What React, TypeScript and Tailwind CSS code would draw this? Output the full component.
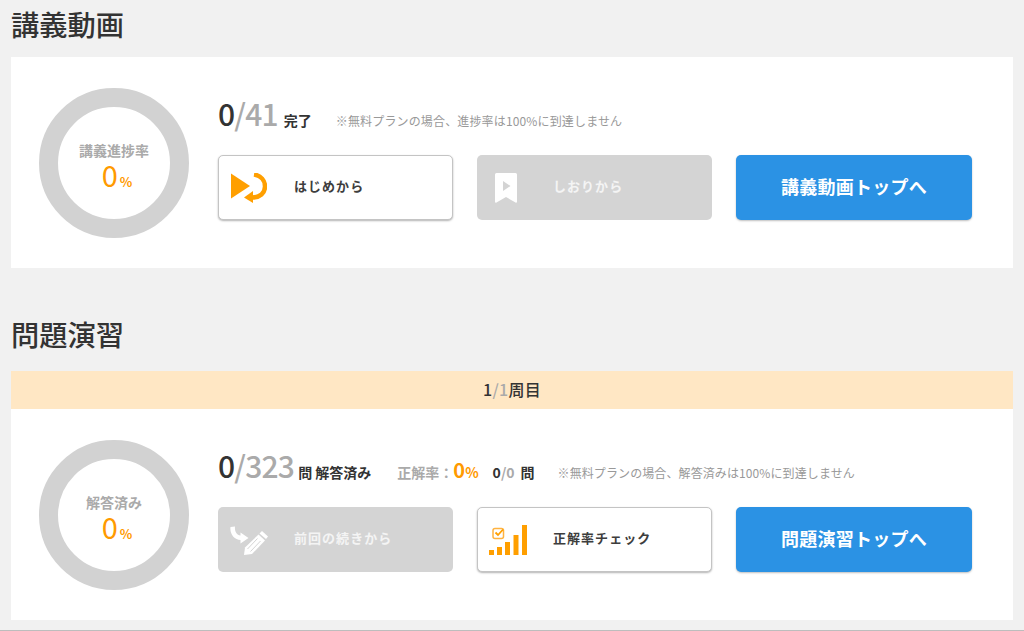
import React from "react";

const font = { fontFamily: '"Noto Sans CJK JP", sans-serif' };

function Ring({ label }: { label: string }) {
  return (
    <div className="w-[150px] h-[150px] shrink-0 rounded-full border-[19px] border-[#d2d2d2] flex flex-col items-center justify-center pt-[11px]">
      <div className="text-[14px] leading-[20px] font-bold text-[#aaaaaa] whitespace-nowrap">{label}</div>
      <div className="flex items-baseline justify-center leading-[28px] text-[#ff9a00] pl-[6px]">
        <span className="text-[29px]">0</span>
        <span className="text-[13px] font-bold ml-[2px]">%</span>
      </div>
    </div>
  );
}

function PlayIcon() {
  return (
    <svg width="36" height="30" viewBox="0 0 36 30" className="shrink-0">
      <path d="M0 0.500 L19 13 L0 25.500 Z" fill="#ff9f00" />
      <path d="M23 1.500 C30 2.500 34 7.500 34 13.500 C34 20 29 24.500 21 24.500" fill="none" stroke="#ff9f00" strokeWidth="4.500" />
      <path d="M13 24.500 L22 18 L22 30 Z" fill="#ff9f00" />
    </svg>
  );
}

function BookmarkIcon() {
  return (
    <svg width="22" height="30" viewBox="0 0 22 30" className="shrink-0">
      <path d="M1.500 0 H20.500 A1.500 1.500 0 0 1 22 1.500 V29 A1 1 0 0 1 20.500 29.500 L11 24 L1.500 29.500 A1 1 0 0 1 0 29 V1.500 A1.500 1.500 0 0 1 1.500 0 Z" fill="#ffffff" />
      <path d="M8 8 L15.500 13 L8 18 Z" fill="#d4d4d4" />
    </svg>
  );
}

function PencilIcon() {
  return (
    <svg width="39" height="30" viewBox="0 0 39 30" className="shrink-0">
      <path d="M0.500 2 L5 1.500 C4.500 6 6.500 10.500 10.500 10.500 L10.500 7.500 L18.500 13 L10.500 18.500 L10.500 15 C4.500 15 -0.500 9 0.500 2 Z" fill="#ffffff" />
      <path d="M32 6 L38 11.500 L36 14 L29.500 8.500 Z" fill="#ffffff" />
      <path d="M28.500 9.500 L35 15.500 L22 29 L14 30 L15 22.500 Z" fill="#ffffff" />
      <path d="M17.500 24 L27.500 13.500 M20.500 26.500 L30.500 16" stroke="#d4d4d4" strokeWidth="1" />
    </svg>
  );
}

function ChartIcon() {
  return (
    <svg width="38" height="30" viewBox="0 0 38 30" className="shrink-0">
      <rect x="0" y="25" width="5" height="5" fill="#ff9f00" />
      <rect x="8" y="22" width="5" height="8" fill="#ff9f00" />
      <rect x="16" y="17" width="5" height="13" fill="#ff9f00" />
      <rect x="24.500" y="10" width="5" height="20" fill="#ff9f00" />
      <rect x="33" y="0" width="5" height="30" fill="#ff9f00" />
      <rect x="4" y="3.500" width="10.500" height="10" rx="2" fill="none" stroke="#ffb340" strokeWidth="1.500" />
      <path d="M6.500 7.500 L9 10 L14 4.500" fill="none" stroke="#ff9f00" strokeWidth="1.800" />
    </svg>
  );
}

function Btn({ icon, label, kind, pad }: { icon: React.ReactNode; label: string; kind: "white" | "off"; pad: string }) {
  const base =
    kind === "white"
      ? "bg-white border border-[#c4c4c4] shadow-[0_1px_2px_rgba(0,0,0,0.3)] text-[#3d3d3d]"
      : "bg-[#d4d4d4] text-[#f4f4f4]";
  const inner = kind === "white" ? "w-[75px]" : "w-[76px]";
  return (
    <div className={`h-[65px] w-[235px] rounded-[5px] flex items-center ${base}`}>
      <div className={`${inner} ${pad} flex items-center`}>{icon}</div>
      <span className="text-[13px] font-bold tracking-[0.08em] whitespace-nowrap pb-[4px]">{label}</span>
    </div>
  );
}

function TopBtn({ label }: { label: string }) {
  return (
    <div className="h-[65px] w-[236px] rounded-[5px] bg-[#2b92e4] text-white text-[18px] font-bold tracking-[0.015em] flex items-center justify-center pb-[3px] shadow-[0_1px_2px_rgba(0,0,0,0.25)]">
      {label}
    </div>
  );
}

function Heading({ children }: { children: React.ReactNode }) {
  return <h2 className="text-[28.25px] leading-[40px] font-medium text-[#333333] pl-[11px]">{children}</h2>;
}

const big = "text-[30px] leading-[38px] font-medium tracking-[-0.8px]";

export default function App() {
  return (
    <div className="h-[631px] w-[1024px] overflow-hidden bg-[#f1f1f1] border-b border-[#bdbdbd]" style={font}>
      <div className="pt-[4px]">
        <Heading>講義動画</Heading>
      </div>
      <section className="mx-[11px] mt-[13px] h-[211px] bg-white flex items-center pl-[28px] gap-[29px]">
        <Ring label="講義進捗率" />
        <div className="flex flex-col gap-[21px] pb-[11px]">
          <div className="flex items-baseline h-[40px] whitespace-nowrap">
            <span className={`${big} text-[#333333]`}>0</span>
            <span className={`${big} text-[#aaaaaa]`}>/41</span>
            <span className="text-[14px] font-bold text-[#333333] ml-[6px]">完了</span>
            <span className="text-[12px] text-[#999999] ml-[24px] tracking-[0.15px]">※無料プランの場合、進捗率は100%に到達しません</span>
          </div>
          <div className="flex gap-[24px]">
            <Btn kind="white" pad="pl-[12px]" icon={<PlayIcon />} label="はじめから" />
            <Btn kind="off" pad="pl-[18px]" icon={<BookmarkIcon />} label="しおりから" />
            <TopBtn label="講義動画トップへ" />
          </div>
        </div>
      </section>
      <div className="pt-[46px]">
        <Heading>問題演習</Heading>
      </div>
      <div className="mx-[11px] mt-[17px] h-[38px] bg-[#ffe7c4] flex items-center justify-center text-[16px] font-medium text-[#333333] tracking-[0.3px] pb-[3px]">
        <span>1</span>
        <span className="text-[#aaaaaa]">/1</span>
        <span>周目</span>
      </div>
      <section className="mx-[11px] h-[211px] bg-white flex items-center pl-[28px] gap-[29px]">
        <Ring label="解答済み" />
        <div className="flex flex-col gap-[21px] pb-[11px]">
          <div className="flex items-baseline h-[40px] whitespace-nowrap">
            <span className={`${big} text-[#333333]`}>0</span>
            <span className={`${big} text-[#aaaaaa]`}>/323</span>
            <span className="text-[14px] font-bold text-[#333333] ml-[4px]">問 解答済み</span>
            <span className="text-[14px] font-bold text-[#aaaaaa] ml-[26px]">正解率：</span>
            <span className="text-[20px] font-bold text-[#ff9a00]">0</span>
            <span className="text-[14px] font-bold text-[#ff9a00]">%</span>
            <span className="text-[14px] font-bold text-[#333333] ml-[14px]">0</span>
            <span className="text-[14px] font-bold text-[#aaaaaa]">/0</span>
            <span className="text-[14px] font-bold text-[#333333] ml-[6px]">問</span>
            <span className="text-[12px] text-[#999999] ml-[23px] tracking-[0.1px]">※無料プランの場合、解答済みは100%に到達しません</span>
          </div>
          <div className="flex gap-[24px]">
            <Btn kind="off" pad="pl-[12px]" icon={<PencilIcon />} label="前回の続きから" />
            <Btn kind="white" pad="pl-[11px]" icon={<ChartIcon />} label="正解率チェック" />
            <TopBtn label="問題演習トップへ" />
          </div>
        </div>
      </section>
    </div>
  );
}
